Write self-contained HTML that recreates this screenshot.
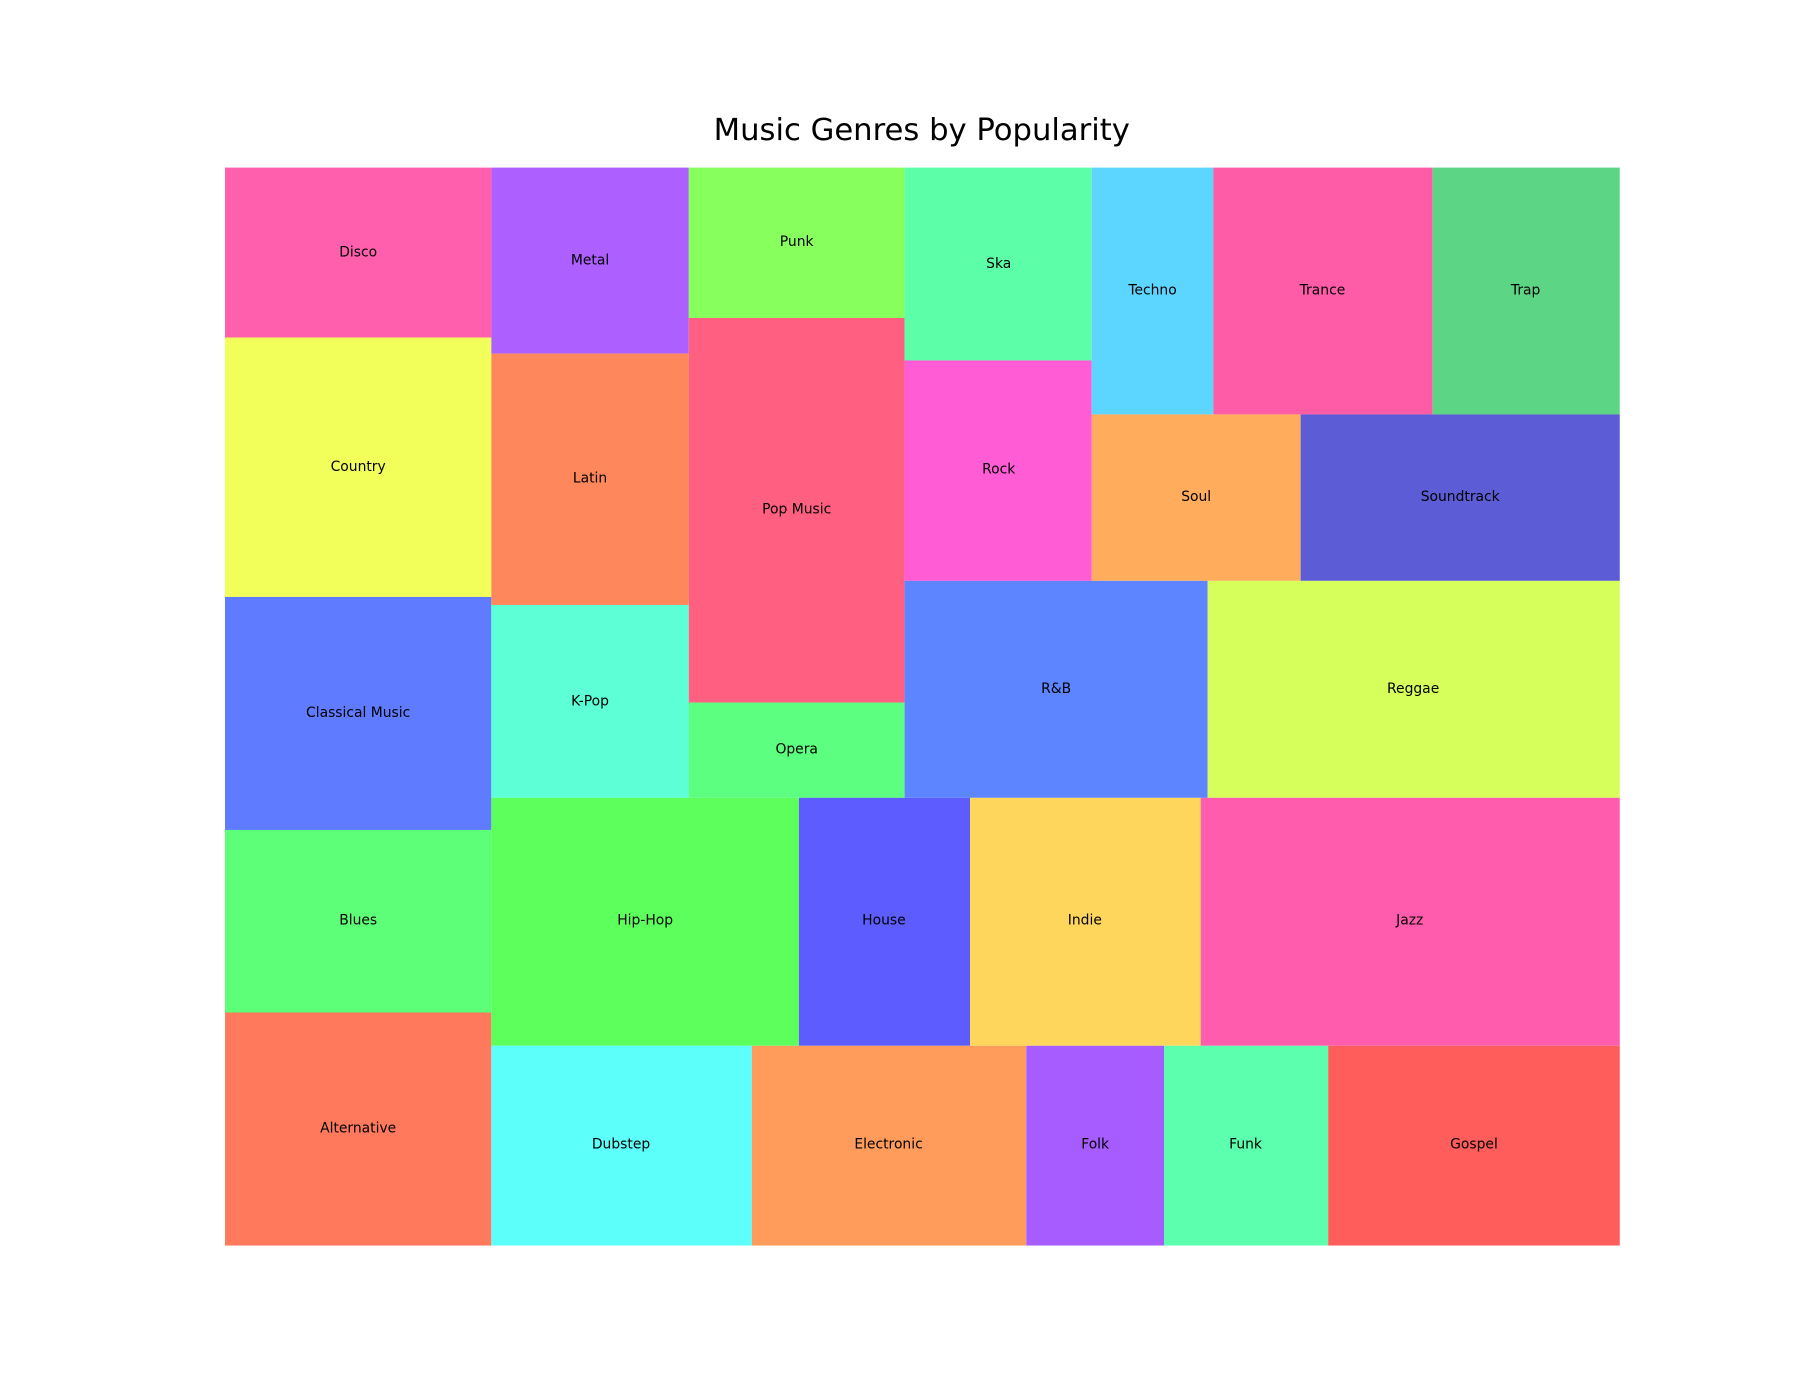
<!DOCTYPE html>
<html><head><meta charset="utf-8"><style>html,body{margin:0;padding:0;background:#fff}svg{display:block}text{font-family:"DejaVu Sans","Liberation Sans",sans-serif;fill:#000}</style></head>
<body>
<svg width="1800" height="1400" viewBox="0 0 1568 1219.56" xmlns="http://www.w3.org/2000/svg">
<text x="803" y="122" font-size="26.7" text-anchor="middle">Music Genres by Popularity</text>
<g font-size="12.1" text-anchor="middle" dominant-baseline="central">
<rect x="196" y="146" width="232" height="148" fill="#FF5FAD"/><text x="312" y="220">Disco</text>
<rect x="196" y="294" width="232" height="226" fill="#F2FF5A"/><text x="312" y="407">Country</text>
<rect x="196" y="520" width="232" height="203" fill="#5F7BFF"/><text x="312" y="621">Classical Music</text>
<rect x="196" y="723" width="232" height="159" fill="#5CFF77"/><text x="312" y="802">Blues</text>
<rect x="196" y="882" width="232" height="203" fill="#FF7A5C"/><text x="312" y="983">Alternative</text>
<rect x="428" y="146" width="172" height="162" fill="#AD5FFF"/><text x="514" y="227">Metal</text>
<rect x="428" y="308" width="172" height="219" fill="#FF875C"/><text x="514" y="417">Latin</text>
<rect x="428" y="527" width="172" height="168" fill="#5CFFD6"/><text x="514" y="611">K-Pop</text>
<rect x="600" y="146" width="188" height="131" fill="#87FF5C"/><text x="694" y="211">Punk</text>
<rect x="600" y="277" width="188" height="335" fill="#FF5F80"/><text x="694" y="444">Pop Music</text>
<rect x="600" y="612" width="188" height="83" fill="#5CFF80"/><text x="694" y="653">Opera</text>
<rect x="788" y="146" width="163" height="168" fill="#5CFFA8"/><text x="870" y="230">Ska</text>
<rect x="788" y="314" width="163" height="192" fill="#FF5CD6"/><text x="870" y="409">Rock</text>
<rect x="951" y="146" width="106" height="215" fill="#5CD6FF"/><text x="1004" y="253">Techno</text>
<rect x="1057" y="146" width="191" height="215" fill="#FF5CA8"/><text x="1152" y="253">Trance</text>
<rect x="1248" y="146" width="163" height="215" fill="#5CD685"/><text x="1329" y="253">Trap</text>
<rect x="951" y="361" width="182" height="145" fill="#FFAD5C"/><text x="1042" y="433">Soul</text>
<rect x="1133" y="361" width="278" height="145" fill="#5C5CD6"/><text x="1272" y="433">Soundtrack</text>
<rect x="788" y="506" width="264" height="189" fill="#5C85FF"/><text x="920" y="600">R&amp;B</text>
<rect x="1052" y="506" width="359" height="189" fill="#D6FF5C"/><text x="1231" y="600">Reggae</text>
<rect x="428" y="695" width="268" height="216" fill="#5CFF5C"/><text x="562" y="802">Hip-Hop</text>
<rect x="696" y="695" width="149" height="216" fill="#5C5CFF"/><text x="770" y="802">House</text>
<rect x="845" y="695" width="201" height="216" fill="#FFD65C"/><text x="945" y="802">Indie</text>
<rect x="1046" y="695" width="365" height="216" fill="#FF5CAD"/><text x="1228" y="802">Jazz</text>
<rect x="428" y="911" width="227" height="174" fill="#5CFFFA"/><text x="541" y="997">Dubstep</text>
<rect x="655" y="911" width="239" height="174" fill="#FF9C5C"/><text x="774" y="997">Electronic</text>
<rect x="894" y="911" width="120" height="174" fill="#A65CFF"/><text x="954" y="997">Folk</text>
<rect x="1014" y="911" width="143" height="174" fill="#5CFFAD"/><text x="1085" y="997">Funk</text>
<rect x="1157" y="911" width="254" height="174" fill="#FF5C5C"/><text x="1284" y="997">Gospel</text>
</g>
</svg>
</body></html>
